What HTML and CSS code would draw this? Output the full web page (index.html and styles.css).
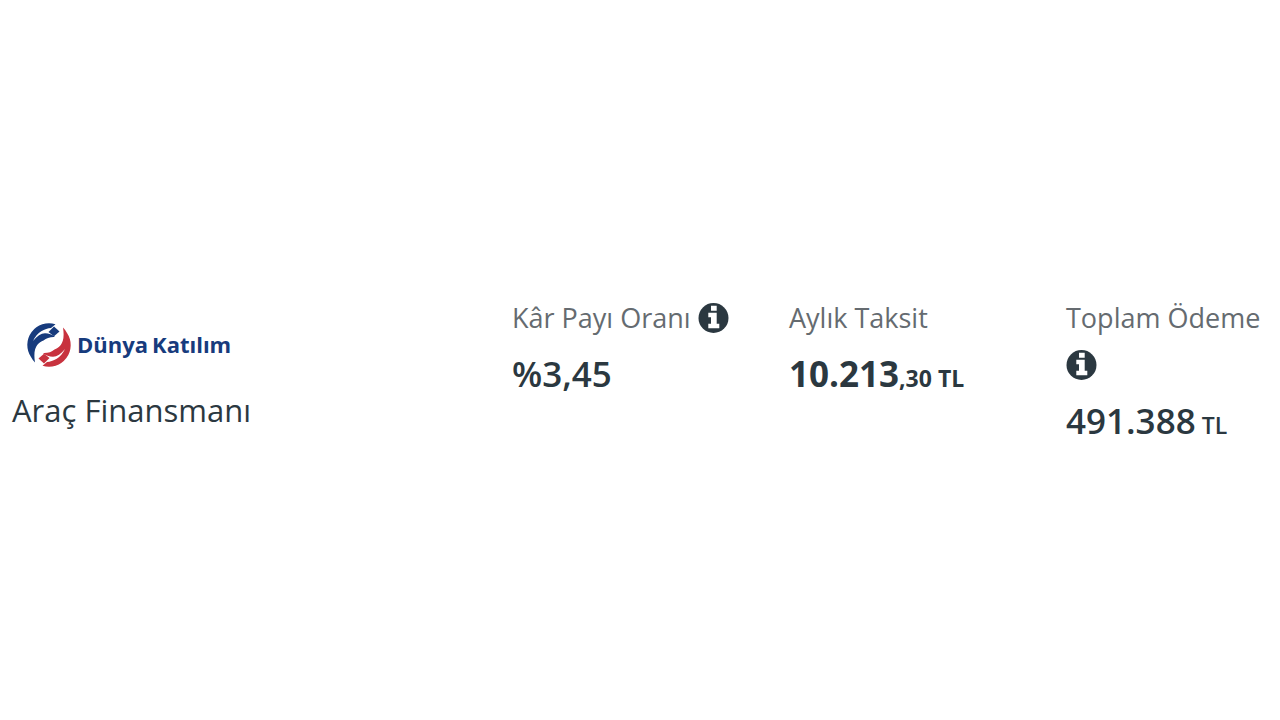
FILE: index.html
```html
<!DOCTYPE html>
<html lang="tr">
<head>
<meta charset="utf-8">
<meta name="viewport" content="width=device-width, initial-scale=1">
<title>Dünya Katılım – Araç Finansmanı</title>
<link rel="stylesheet" href="styles.css">
</head>
<body>
<svg class="symbols" aria-hidden="true">
  <symbol id="info" viewBox="0 0 30 30">
    <circle cx="15" cy="15" r="15" fill="#2b3840"/>
    <path d="M12.5 2.8h5.7v5h-5.7zM9.8 9.8h8.400v11h2.600v4.400H9.800v-4.400h2.700v-6.600H9.800z" fill="#fff"/>
  </symbol>
  <symbol id="wing" viewBox="0 0 44 44">
    <path d="M8 39.500Q5.500 37 4 34A21.700 21.700 0 0 1 28.500 1.200L24 5C18 5.500 10 9 6 18C10 13 14 10.300 18 10.300C22 10.300 25 11.500 28 14C23 13.800 19.500 15 16.500 17.500C11 20 5.500 24 8 39.500Z"/>
    <path d="M27 3.500L32.500 8.500L27 13.200L21.500 9Z"/>
  </symbol>
</svg>
<main class="page">
  <article class="offer">
    <section class="product">
      <div class="brand">
        <svg class="brand-mark" viewBox="0 0 44 44" aria-hidden="true">
          <use href="#wing" width="44" height="44" fill="#173b7d"/>
          <use href="#wing" width="44" height="44" fill="#c8323e" transform="rotate(180 22 22)"/>
        </svg>
        <div class="brand-name"><span>Dünya</span> <span>Katılım</span></div>
      </div>
      <h1 class="product-name">Araç Finansmanı</h1>
    </section>
    <section class="figure">
      <div class="label">Kâr Payı Oranı <svg class="info" role="img" aria-label="Bilgi"><use href="#info"/></svg></div>
      <div class="value">%3,45</div>
    </section>
    <section class="figure">
      <div class="label">Aylık Taksit</div>
      <div class="value value-strong">10.213<span class="minor">,30 TL</span></div>
    </section>
    <section class="figure">
      <div class="label">Toplam Ödeme <svg class="info" role="img" aria-label="Bilgi"><use href="#info"/></svg></div>
      <div class="value">491.388<span class="minor"> TL</span></div>
    </section>
  </article>
</main>
</body>
</html>
```
FILE: styles.css
```css
body {
  margin: 0;
  background: #fff;
  color: #2b3840;
  font-family: "Open Sans", "Noto Sans", sans-serif;
}
.symbols {
  position: absolute;
  width: 0;
  height: 0;
}
.page {
  min-height: 100vh;
  display: flex;
  align-items: center;
}
.offer {
  flex: 1;
  display: grid;
  grid-template-columns: 500fr 277fr 277fr 214fr;
  padding: 24px 0 0 12px;
}
.product {
  padding-top: 29px;
}
.brand {
  display: flex;
  align-items: center;
  gap: 6px;
  height: 44px;
  padding-left: 15px;
}
.brand-mark {
  width: 44px;
  height: 44px;
}
.brand-name {
  display: flex;
  gap: 4px;
  color: #173b7d;
  font-size: 22px;
  line-height: 32px;
  padding-bottom: 2px;
  font-weight: 700;
}
.product-name {
  margin: 19px 0 0;
  font-size: 31px;
  line-height: 48px;
  font-weight: 400;
}
.label {
  font-size: 27px;
  line-height: 47px;
  color: #656b70;
}
.info {
  width: 31px;
  height: 30px;
  vertical-align: -5px;
}
.value {
  margin-top: 7px;
  font-size: 35px;
  line-height: 52px;
  font-weight: 600;
}
.value-strong {
  font-weight: 700;
}
.minor {
  font-size: 23px;
}
```
